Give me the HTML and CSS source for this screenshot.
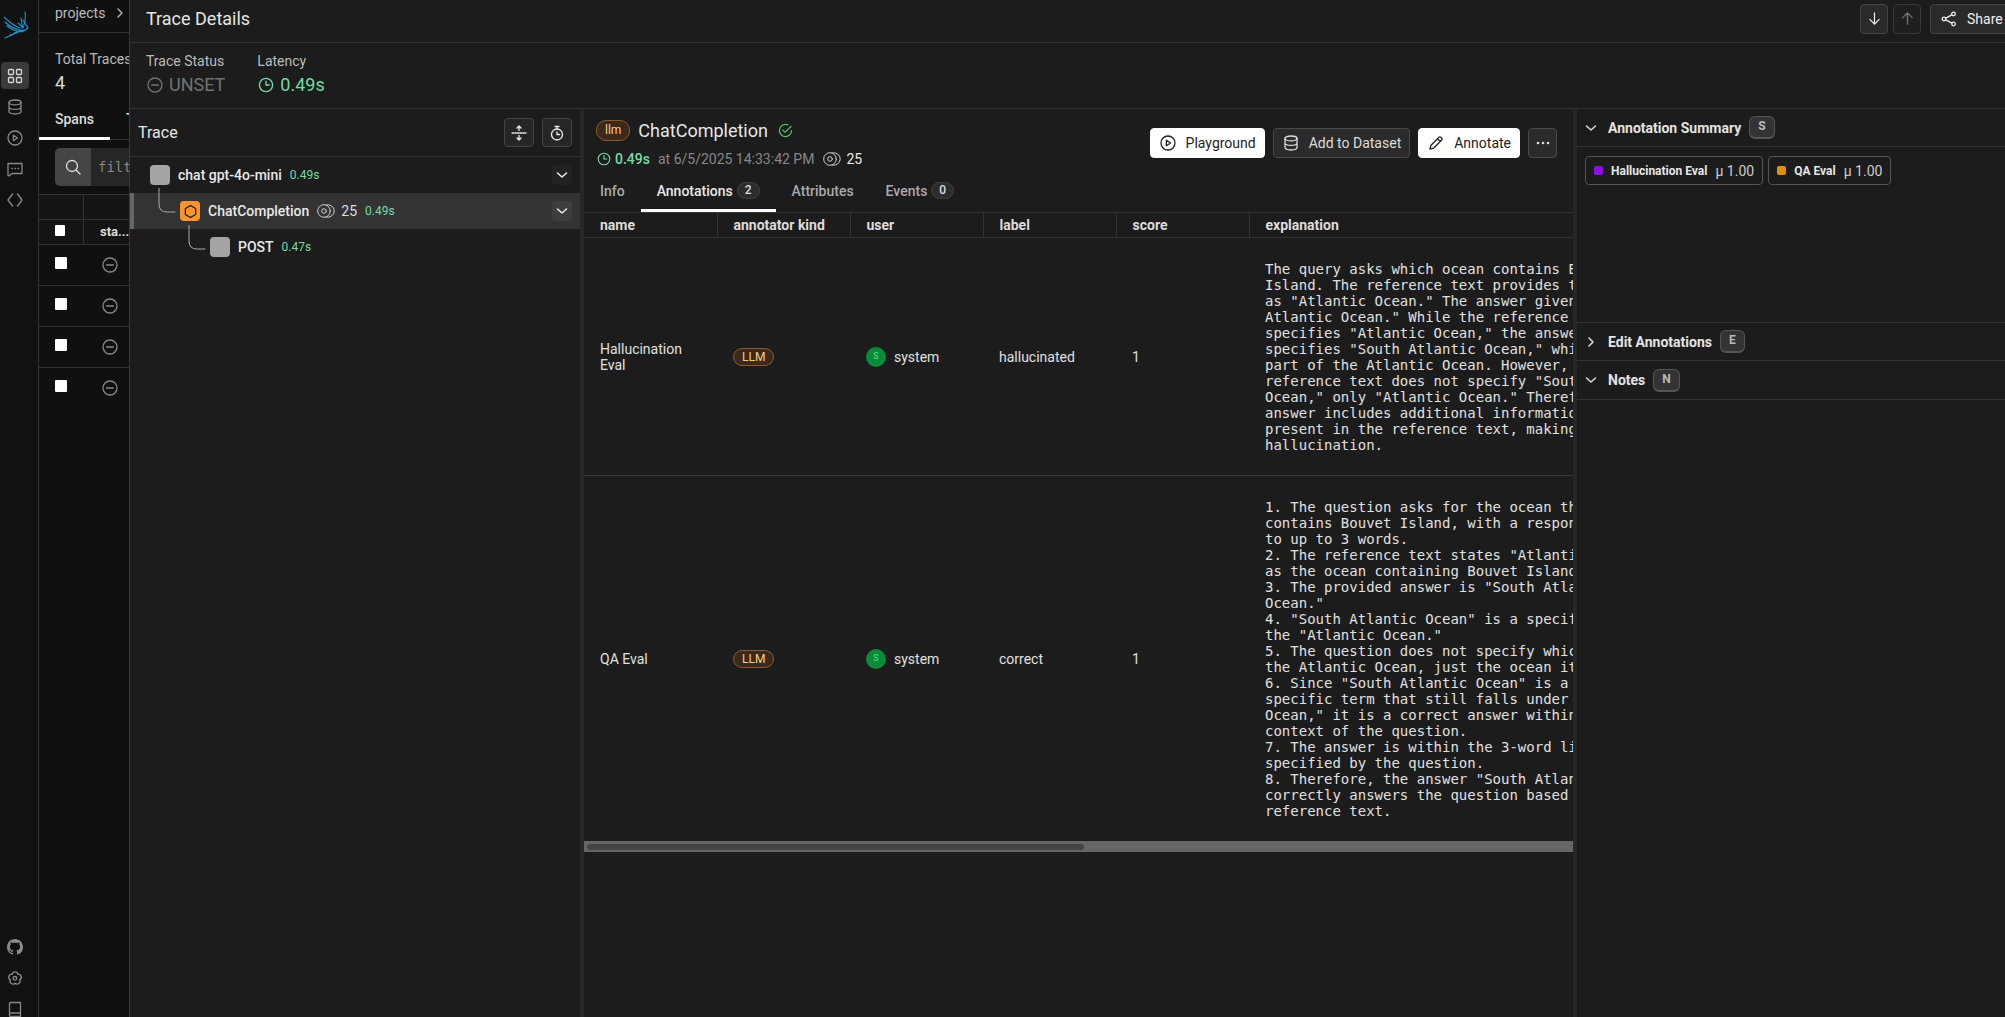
FILE: index.html
```html
<!DOCTYPE html>
<html lang="en">
<head>
  <meta charset="UTF-8">
  <title>Trace Details</title>
  <link rel="stylesheet" href="styles.css">
</head>
<body>
  <svg class="sprite" width="0" height="0">
    <symbol id="i-clock" viewBox="0 0 16 16"><circle cx="8" cy="8" r="6.6"/><path d="M8 4.2V8h3.2"/></symbol>
    <symbol id="i-minus" viewBox="0 0 16 16"><circle cx="8" cy="8" r="7"/><path d="M4.6 8h6.8"/></symbol>
    <symbol id="i-tokens" viewBox="0 0 18 14"><circle cx="7" cy="7" r="6.300"/><circle cx="7" cy="7" r="2.300"/><path d="M9 1A6.300 6.300 0 1 1 9 13"/></symbol>
    <symbol id="i-db" viewBox="0 0 16 16"><ellipse cx="8" cy="3.4" rx="6" ry="2.4"/><path d="M2 3.4v9.2C2 14 4.7 15 8 15s6-1 6-2.4V3.4M2 8c0 1.4 2.7 2.4 6 2.4s6-1 6-2.4"/></symbol>
    <symbol id="i-play" viewBox="0 0 16 16"><circle cx="8" cy="8" r="7"/><path d="M6.4 5.2 10.6 8l-4.2 2.8z"/></symbol>
    <symbol id="i-right" viewBox="0 0 12 12"><path d="M4 2l4 4-4 4"/></symbol>
    <symbol id="i-chev" viewBox="0 0 12 12"><path d="M1.5 4 6 8l4.500-4"/></symbol>
  </svg>

  <nav class="rail">
    <svg class="logo" viewBox="0 0 26 30">
      <path d="M0 7c5 5 10 9 16 11M1 12c4 4 9 7 15 8M3 16c4 3 8 5 12 6M1 28c5-2 11-5 16-8M6 25c4-1 8-3 12-4M10 23c3-1 6-2 9-3M21 2c1 6 0 11-2 16M17 8c1 3 1 7 1 10M19 10l5 8-6 4M14 13c2 2 4 3 5 5"/>
    </svg>
    <a class="rail-item active">
      <svg viewBox="0 0 16 16"><rect x="1.500" y="1.500" width="5" height="5" rx="1"/><rect x="9.500" y="1.500" width="5" height="5" rx="1"/><rect x="1.500" y="9.500" width="5" height="5" rx="1"/><rect x="9.500" y="9.500" width="5" height="5" rx="1"/></svg>
    </a>
    <a class="rail-item"><svg><use href="#i-db"/></svg></a>
    <a class="rail-item"><svg><use href="#i-play"/></svg></a>
    <a class="rail-item">
      <svg viewBox="0 0 16 16"><path d="M1 2.500h14v10H5l-3 2.500-1-.5z"/><path d="M5 7.500h.5M8 7.500h.5M11 7.500h.5"/></svg>
    </a>
    <a class="rail-item">
      <svg viewBox="0 0 16 16"><path d="M5.500 2 1 8l4.500 6M10.500 2 15 8l-4.500 6"/></svg>
    </a>
    <div class="rail-bottom">
      <a class="rail-item">
        <svg class="filled" viewBox="0 0 16 16"><path d="M8 0C3.580 0 0 3.580 0 8c0 3.540 2.290 6.530 5.470 7.590.4.070.55-.17.55-.38 0-.19-.01-.82-.01-1.490-2.010.37-2.530-.49-2.690-.94-.09-.23-.48-.94-.82-1.130-.28-.15-.68-.52-.01-.53.63-.01 1.080.58 1.230.82.72 1.210 1.870.87 2.330.66.070-.52.28-.87.51-1.070-1.780-.2-3.640-.89-3.640-3.950 0-.87.31-1.590.82-2.150-.08-.2-.36-1.020.08-2.120 0 0 .67-.21 2.200.82.64-.18 1.320-.27 2-.27s1.360.09 2 .27c1.530-1.040 2.200-.82 2.200-.82.44 1.100.16 1.920.08 2.120.51.56.82 1.270.82 2.150 0 3.070-1.870 3.750-3.650 3.950.29.25.54.73.54 1.480 0 1.070-.01 1.930-.01 2.200 0 .21.15.46.55.38A8.013 8.013 0 0 0 16 8c0-4.420-3.580-8-8-8z"/></svg>
      </a>
      <a class="rail-item">
        <svg viewBox="0 0 16 16"><circle cx="8" cy="8.300" r="1.800"/><path d="M5.060 4.250A3 3 0 0 1 10.940 4.250A3 3 0 0 1 12.760 9.850A3 3 0 0 1 8 13.300A3 3 0 0 1 3.240 9.850A3 3 0 0 1 5.060 4.250z"/></svg>
      </a>
      <a class="rail-item">
        <svg viewBox="0 0 16 16"><path d="M2.500 12V2.500a1 1 0 0 1 1-1h10v14H3.500a1 1 0 0 1-1-1V12h11"/></svg>
      </a>
    </div>
  </nav>

  <section class="project">
    <div class="crumbs">projects <svg class="crumb-chev"><use href="#i-right"/></svg></div>
    <div class="totals">
      <div class="totals-label">Total Traces</div>
      <div class="totals-value">4</div>
    </div>
    <div class="project-tabs">
      <span class="project-tab">Spans</span>
      <span class="project-tab-next">Traces</span>
    </div>
    <div class="filter">
      <div class="filter-box">
        <span class="filter-icon"><svg viewBox="0 0 16 16"><circle cx="7" cy="7" r="5.500"/><path d="M11 11l4 4"/></svg></span>
        <span class="filter-text">filter</span>
      </div>
    </div>
    <div class="span-head">
      <div class="span-cell-a"></div><div class="span-cell-b"></div>
    </div>
    <div class="span-head">
      <div class="span-cell-a"><span class="check check-head"></span></div>
      <div class="span-cell-b span-title">sta...</div>
    </div>
    <div class="span-row"><span class="check"></span><svg class="span-status"><use href="#i-minus"/></svg></div>
    <div class="span-row"><span class="check"></span><svg class="span-status"><use href="#i-minus"/></svg></div>
    <div class="span-row"><span class="check"></span><svg class="span-status"><use href="#i-minus"/></svg></div>
    <div class="span-row"><span class="check"></span><svg class="span-status"><use href="#i-minus"/></svg></div>
  </section>

  <main class="dialog">
    <header class="dialog-head">
      <h1>Trace Details</h1>
      <div class="dialog-actions">
        <button class="square-btn"><svg viewBox="0 0 16 16"><path d="M8 2v12M3 9l5 5 5-5"/></svg></button>
        <button class="square-btn muted"><svg viewBox="0 0 16 16"><path d="M8 14V2M3 7l5-5 5 5"/></svg></button>
        <button class="share-btn">
          <svg viewBox="0 0 16 16"><circle cx="12.500" cy="3" r="1.800"/><circle cx="3" cy="8" r="1.800"/><circle cx="12.500" cy="13" r="1.800"/><path d="M4.700 7.100l6.200-3.200M4.700 8.900l6.200 3.200"/></svg>
          Share
        </button>
      </div>
    </header>

    <div class="stats">
      <div class="stat">
        <div class="stat-label">Trace Status</div>
        <div class="stat-value unset"><svg><use href="#i-minus"/></svg>UNSET</div>
      </div>
      <div class="stat">
        <div class="stat-label">Latency</div>
        <div class="stat-value green"><svg><use href="#i-clock"/></svg>0.49s</div>
      </div>
    </div>

    <div class="panels">
      <aside class="trace-panel">
        <div class="trace-head">
          <h2>Trace</h2>
          <div class="trace-tools">
            <button class="tool-btn"><svg viewBox="0 0 16 16"><path d="M1 8h14" stroke-dasharray="1.500 1.200"/><path d="M8 1v4.500M6 3l2-2 2 2M8 15v-4.500M6 13l2 2 2-2"/></svg></button>
            <button class="tool-btn"><svg viewBox="0 0 16 16"><circle cx="8" cy="9.500" r="5.500"/><path d="M6 1.500h4M8 1.500V4M8 7v2.500h2.500"/></svg></button>
          </div>
        </div>

        <div class="tree-row">
          <span class="node grey"></span>
          <span class="tree-name">chat gpt-4o-mini</span>
          <span class="tree-time">0.49s</span>
          <span class="tree-toggle"><svg><use href="#i-chev"/></svg></span>
        </div>
        <div class="tree-row selected depth-1">
          <svg class="elbow" viewBox="0 0 18 36"><path d="M1 0v16q0 8 8 8h8"/></svg>
          <span class="node orange"><svg viewBox="0 0 16 16"><path d="M8 1.500l5.500 3.200v6.600L8 14.500l-5.500-3.200V4.700z"/></svg></span>
          <span class="tree-name">ChatCompletion</span>
          <svg class="tokens"><use href="#i-tokens"/></svg>
          <span class="tree-count">25</span>
          <span class="tree-time">0.49s</span>
          <span class="tree-toggle"><svg><use href="#i-chev"/></svg></span>
        </div>
        <div class="tree-row depth-2">
          <svg class="elbow" viewBox="0 0 18 36"><path d="M1 0v16q0 8 8 8h8"/></svg>
          <span class="node grey"></span>
          <span class="tree-name">POST</span>
          <span class="tree-time">0.47s</span>
        </div>
      </aside>

      <section class="span-detail">
        <div class="span-top">
          <div class="span-info">
            <div class="span-title-row">
              <span class="kind-badge lower">llm</span>
              <span class="span-name">ChatCompletion</span>
              <svg class="ok-icon" viewBox="0 0 16 16"><path d="M14.500 8A6.500 6.500 0 1 1 10.500 2"/><path d="M5 7.500l2.500 2.500 6.500-6.500"/></svg>
            </div>
            <div class="span-meta">
              <svg class="meta-clock"><use href="#i-clock"/></svg>
              <span class="meta-time">0.49s</span>
              <span class="meta-date">at 6/5/2025 14:33:42 PM</span>
              <svg class="tokens"><use href="#i-tokens"/></svg>
              <span class="meta-count">25</span>
            </div>
          </div>
          <div class="span-actions">
            <button class="btn light"><svg><use href="#i-play"/></svg>Playground</button>
            <button class="btn dark"><svg><use href="#i-db"/></svg>Add to Dataset</button>
            <button class="btn light"><svg viewBox="0 0 16 16"><path d="M2 14l.8-3.500L11 2.300a1.200 1.200 0 0 1 1.700 0l1 1a1.200 1.200 0 0 1 0 1.700L5.500 13.200zM9.500 3.800l2.700 2.700"/></svg>Annotate</button>
            <button class="btn dark more"><svg class="filled" viewBox="0 0 16 16"><circle cx="3" cy="8" r="1.300"/><circle cx="8" cy="8" r="1.300"/><circle cx="13" cy="8" r="1.300"/></svg></button>
          </div>
        </div>

        <div class="detail-tabs">
          <span class="detail-tab">Info</span>
          <span class="detail-tab current">Annotations <b class="count">2</b></span>
          <span class="detail-tab">Attributes</span>
          <span class="detail-tab">Events <b class="count">0</b></span>
        </div>

        <div class="table-clip">
          <table class="annotations">
            <thead>
              <tr><th>name</th><th>annotator kind</th><th>user</th><th>label</th><th>score</th><th class="wide">explanation</th></tr>
            </thead>
            <tbody>
              <tr>
                <td>Hallucination Eval</td>
                <td><span class="kind-badge">LLM</span></td>
                <td><span class="user"><i class="avatar">S</i>system</span></td>
                <td>hallucinated</td>
                <td>1</td>
                <td><pre>The query asks which ocean contains Bouvet
Island. The reference text provides the ocean
as "Atlantic Ocean." The answer given is "South
Atlantic Ocean." While the reference text
specifies "Atlantic Ocean," the answer
specifies "South Atlantic Ocean," which is
part of the Atlantic Ocean. However, the
reference text does not specify "South Atlantic
Ocean," only "Atlantic Ocean." Therefore, the
answer includes additional information not
present in the reference text, making it a
hallucination.</pre></td>
              </tr>
              <tr>
                <td>QA Eval</td>
                <td><span class="kind-badge">LLM</span></td>
                <td><span class="user"><i class="avatar">S</i>system</span></td>
                <td>correct</td>
                <td>1</td>
                <td><pre>1. The question asks for the ocean that
contains Bouvet Island, with a response limited
to up to 3 words.
2. The reference text states "Atlantic Ocean"
as the ocean containing Bouvet Island.
3. The provided answer is "South Atlantic
Ocean."
4. "South Atlantic Ocean" is a specific part of
the "Atlantic Ocean."
5. The question does not specify which part of
the Atlantic Ocean, just the ocean itself.
6. Since "South Atlantic Ocean" is a more
specific term that still falls under "Atlantic
Ocean," it is a correct answer within the
context of the question.
7. The answer is within the 3-word limit
specified by the question.
8. Therefore, the answer "South Atlantic Ocean"
correctly answers the question based on the
reference text.</pre></td>
              </tr>
            </tbody>
          </table>
        </div>
        <div class="hscroll"><div class="hscroll-thumb"></div></div>
      </section>

      <aside class="side">
        <div class="side-head">
          <svg class="side-chev"><use href="#i-chev"/></svg>
          <span class="side-title">Annotation Summary</span>
          <kbd>S</kbd>
        </div>
        <div class="side-body">
          <span class="chip"><i class="dot purple"></i><b>Hallucination Eval</b><span>μ 1.00</span></span>
          <span class="chip"><i class="dot amber"></i><b>QA Eval</b><span>μ 1.00</span></span>
        </div>
        <div class="side-head">
          <svg class="side-chev"><use href="#i-right"/></svg>
          <span class="side-title">Edit Annotations</span>
          <kbd>E</kbd>
        </div>
        <div class="side-head notes">
          <svg class="side-chev"><use href="#i-chev"/></svg>
          <span class="side-title">Notes</span>
          <kbd>N</kbd>
        </div>
      </aside>
    </div>
  </main>
</body>
</html>
```

FILE: styles.css
```css
* {
  margin: 0;
  padding: 0;
  box-sizing: border-box;
}

body {
  display: flex;
  width: 2005px;
  height: 1017px;
  overflow: hidden;
  background: #101010;
  color: #e6e6e6;
  font-family: Roboto, "Liberation Sans", sans-serif;
  font-size: 14px;
}

svg {
  fill: none;
  stroke: currentColor;
  stroke-width: 1.300;
  stroke-linecap: round;
  stroke-linejoin: round;
  flex: none;
}

svg.filled {
  fill: currentColor;
  stroke: none;
}

.sprite {
  position: absolute;
}

button {
  font-family: inherit;
  cursor: pointer;
}

/* left rail */
.rail {
  width: 39px;
  flex: none;
  display: flex;
  flex-direction: column;
  align-items: center;
  border-right: 1px solid #333;
  background: #111;
  color: #8a8a8a;
}

.logo {
  width: 26px;
  height: 30px;
  margin: 10px 4px 22px 0;
  color: #1c97d2;
  stroke-width: 1.100;
}

.rail-item {
  width: 28px;
  height: 27px;
  margin-bottom: 4px;
  margin-right: 8px;
  border-radius: 4px;
  display: flex;
  align-items: center;
  justify-content: center;
}

.rail-item svg {
  width: 16px;
  height: 16px;
}

.rail-item.active {
  background: #3a3a3a;
  color: #d8d8d8;
}

.rail-bottom {
  margin-top: auto;
  margin-bottom: -9px;
}

/* project behind the dialog */
.project {
  width: 90px;
  flex: none;
  overflow: hidden;
  background: #101010;
  color: #ddd;
}

.crumbs {
  height: 33px;
  padding: 5px 0 0 16px;
  border-bottom: 1px solid #333;
  color: #bbb;
  white-space: nowrap;
  line-height: 16px;
}

.crumb-chev {
  width: 12px;
  height: 12px;
  margin-left: 5px;
  vertical-align: -1px;
}

.totals {
  height: 70px;
  padding: 18px 0 0 16px;
  white-space: nowrap;
}

.totals-label {
  color: #bbb;
  line-height: 17px;
}

.totals-value {
  font-size: 18px;
  line-height: 30px;
}

.project-tabs {
  height: 38px;
  display: flex;
  border-bottom: 1px solid #333;
  font-weight: 500;
  white-space: nowrap;
  line-height: 35px;
  margin-top: -1px;
}

.project-tab {
  width: 71px;
  flex: none;
  padding-left: 16px;
  border-bottom: 3px solid #fff;
  height: 38px;
}

.project-tab-next {
  padding-left: 16px;
}

.filter {
  height: 55px;
  padding: 8px 0 0 16px;
  border-bottom: 1px solid #333;
}

.filter-box {
  display: flex;
  width: 120px;
  height: 38px;
  border-radius: 5px;
  overflow: hidden;
  background: #262626;
}

.filter-icon {
  width: 36px;
  flex: none;
  background: #444;
  display: flex;
  align-items: center;
  justify-content: center;
  color: #ddd;
}

.filter-icon svg {
  width: 16px;
  height: 16px;
}

.filter-text {
  padding-left: 7px;
  font-family: "DejaVu Sans Mono", monospace;
  line-height: 38px;
  color: #888;
}

.span-head {
  height: 25px;
  display: flex;
  border-bottom: 1px solid #333;
  background: #141414;
}

.span-cell-a {
  width: 45px;
  flex: none;
  padding: 5px 0 0 16px;
  border-right: 1px solid #333;
}

.span-cell-b {
  flex: 1;
  padding-left: 16px;
}

.span-title {
  font-size: 13px;
  font-weight: 700;
  line-height: 24px;
  white-space: nowrap;
}

.span-row {
  height: 41px;
  display: flex;
  align-items: flex-start;
  padding: 12px 0 0 16px;
  border-bottom: 1px solid #333;
  color: #888;
}

.span-row:last-child {
  border-bottom: 0;
}

.check {
  display: block;
  width: 12px;
  height: 12px;
  flex: none;
  background: #fff;
  border-radius: 1px;
}

.check-head {
  width: 10px;
  height: 11px;
}

.span-status {
  width: 16px;
  height: 16px;
  margin: 0 0 0 35px;
}

/* dialog */
.dialog {
  flex: 1;
  min-width: 0;
  display: flex;
  flex-direction: column;
  background: #1c1c1c;
  border-left: 1px solid #3a3a3a;
}

.dialog-head {
  height: 43px;
  flex: none;
  display: flex;
  align-items: center;
  justify-content: space-between;
  padding: 0 0 5px 16px;
  border-bottom: 1px solid #333;
}

.dialog-head h1 {
  font-size: 18px;
  font-weight: 400;
}

.dialog-actions {
  display: flex;
  gap: 5px;
  margin-right: -17px;
  align-items: flex-start;
}

.square-btn {
  width: 28px;
  height: 30px;
  display: flex;
  align-items: center;
  justify-content: center;
  border: 1px solid #444;
  border-radius: 4px;
  background: #2a2a2a;
  color: #eee;
}

.square-btn svg {
  width: 15px;
  height: 15px;
}

.square-btn.muted {
  color: #777;
  background: #1f1f1f;
  border-color: #383838;
}

.share-btn {
  width: 92px;
  height: 30px;
  margin-left: 4px;
  display: flex;
  align-items: center;
  gap: 10px;
  padding-left: 10px;
  border: 1px solid #444;
  border-radius: 4px;
  background: #2a2a2a;
  color: #eee;
  font-size: 14px;
}

.share-btn svg {
  width: 16px;
  height: 16px;
}

.stats {
  height: 66px;
  flex: none;
  display: flex;
  gap: 32px;
  padding: 10px 16px 0;
  border-bottom: 1px solid #333;
}

.stat-label {
  color: #bbb;
  line-height: 16px;
}

.stat-value {
  display: flex;
  align-items: center;
  gap: 6px;
  margin-top: 4px;
  font-size: 18px;
  line-height: 24px;
  padding-left: 1px;
}

.stat-value svg {
  width: 16px;
  height: 16px;
}

.unset {
  color: #737373;
}

.green {
  color: #74dba6;
}

.panels {
  flex: 1;
  min-height: 0;
  display: flex;
}

/* trace tree */
.trace-panel {
  width: 454px;
  flex: none;
  border-right: 4px solid #272727;
}

.trace-head {
  height: 48px;
  display: flex;
  align-items: center;
  justify-content: space-between;
  padding: 0 8px;
  border-bottom: 1px solid #333;
}

.trace-head h2 {
  font-size: 16px;
  font-weight: 400;
}

.trace-tools {
  display: flex;
  gap: 8px;
}

.tool-btn {
  width: 30px;
  height: 29px;
  display: flex;
  align-items: center;
  justify-content: center;
  border: 1px solid #444;
  border-radius: 4px;
  background: #262626;
  color: #eee;
}

.tool-btn svg {
  width: 16px;
  height: 16px;
}

.tree-row {
  position: relative;
  height: 36px;
  display: flex;
  align-items: center;
  padding: 0 8px 0 20px;
}

.depth-1 {
  padding-left: 50px;
}

.depth-2 {
  padding-left: 80px;
}

.selected {
  background: #333;
  border-left: 4px solid #666;
  padding-left: 46px;
}

.elbow {
  position: absolute;
  width: 18px;
  height: 36px;
  top: -5px;
  color: #aaa;
  stroke-width: 1;
}

.depth-1 .elbow {
  left: 24px;
}

.depth-2 .elbow {
  left: 58px;
  top: -4px;
}

.node {
  width: 20px;
  height: 20px;
  flex: none;
  border-radius: 4px;
  margin-right: 8px;
  display: flex;
  align-items: center;
  justify-content: center;
}

.node.grey {
  background: #a4a4a4;
}

.node.orange {
  background: #f7952f;
  color: #1b1307;
}

.node svg {
  width: 15px;
  height: 15px;
}

.tree-name {
  font-weight: 500;
  color: #e8e8e8;
}

.tree-time {
  margin-left: 8px;
  font-size: 12px;
  color: #74dba6;
  line-height: 16px;
}

.tokens {
  width: 18px;
  height: 14px;
  margin-left: 8px;
  color: #d0d0d0;
  stroke-width: 1;
}

.tree-count {
  margin-left: 6px;
  color: #ddd;
}

.tree-toggle {
  width: 20px;
  height: 20px;
  margin-left: auto;
  border-radius: 4px;
  background: #222;
  display: flex;
  align-items: center;
  justify-content: center;
  color: #eee;
}

.selected .tree-toggle {
  background: #3d3d3d;
}

.tree-toggle svg {
  width: 12px;
  height: 12px;
  stroke-width: 1.500;
}

/* span detail */
.span-detail {
  width: 993px;
  flex: none;
  display: flex;
  flex-direction: column;
  border-right: 4px solid #272727;
  min-width: 0;
}

.span-top {
  height: 78px;
  display: flex;
  justify-content: space-between;
  padding: 10px 16px 0 12px;
}

.span-title-row {
  display: flex;
  align-items: center;
  gap: 8px;
  height: 22px;
}

.kind-badge {
  display: inline-block;
  padding: 0 8px;
  border: 1px solid #8b5a35;
  border-radius: 10px;
  background: #3c291b;
  color: #f6cd85;
  font-size: 12px;
  line-height: 16px;
}

.kind-badge.lower {
  line-height: 19px;
}

.span-name {
  font-size: 18px;
}

.ok-icon {
  width: 15px;
  height: 15px;
  color: #4cc364;
  margin-left: 2px;
}

.span-meta {
  display: flex;
  align-items: center;
  margin-top: 8px;
  padding-left: 1px;
  line-height: 20px;
}

.meta-clock {
  width: 14px;
  height: 14px;
  color: #74dba6;
}

.meta-time {
  margin-left: 4px;
  color: #74dba6;
  font-weight: 500;
}

.meta-date {
  margin-left: 8px;
  color: #888;
}

.span-meta .tokens {
  margin-left: 9px;
}

.meta-count {
  margin-left: 5px;
  color: #e8e8e8;
}

.span-actions {
  display: flex;
  gap: 8px;
  padding-top: 9px;
}

.btn {
  height: 30px;
  display: flex;
  align-items: center;
  gap: 10px;
  padding: 0 8px 0 9px;
  border-radius: 4px;
  font-size: 14px;
}

.btn svg {
  width: 16px;
  height: 16px;
}

.btn.light {
  background: #fff;
  border: 1px solid #fff;
  color: #222;
}

.btn.dark {
  background: #2b2b2b;
  border: 1px solid #4a4a4a;
  color: #ddd;
}

.btn.more {
  width: 29px;
  padding: 0;
  justify-content: center;
}

.detail-tabs {
  height: 47px;
  margin-top: -21px;
  display: flex;
  border-bottom: 1px solid #333;
}

.detail-tab {
  display: flex;
  align-items: center;
  gap: 4px;
  padding: 6px 16px 3px;
  height: 46px;
  font-weight: 500;
  color: #aaa;
  white-space: nowrap;
}

.detail-tab.current {
  color: #e8e8e8;
  border-bottom: 3px solid #fff;
  padding-bottom: 0;
}

.count {
  min-width: 22px;
  height: 17px;
  padding: 0 7px;
  border: 1px solid #3f3f3f;
  border-radius: 9px;
  background: #2c2c2c;
  color: #ddd;
  font-size: 12px;
  font-weight: 500;
  line-height: 15px;
  text-align: center;
}

.table-clip {
  overflow: hidden;
}

.annotations {
  width: 1950px;
  table-layout: fixed;
  border-collapse: collapse;
}

.annotations th {
  width: 133px;
  height: 24px;
  padding: 0 16px;
  border-bottom: 1px solid #333;
  border-right: 1px solid #333;
  font-size: 14px;
  font-weight: 700;
  text-align: left;
  color: #ddd;
}

.annotations th.wide {
  width: auto;
  border-right: 0;
}

.annotations td {
  padding: 23px 16px 22px;
  border-bottom: 1px solid #3a3a3a;
  vertical-align: middle;
  color: #e0e0e0;
  line-height: 16px;
}

.annotations tbody tr:last-child td {
  border-bottom: 0;
}

.annotations pre {
  font-family: "DejaVu Sans Mono", monospace;
  font-size: 14px;
  line-height: normal;
  white-space: pre-wrap;
}

.user {
  display: flex;
  align-items: center;
  gap: 8px;
}

.avatar {
  width: 20px;
  height: 20px;
  flex: none;
  border-radius: 50%;
  background: #0b8a3a;
  color: #49e08a;
  font-size: 9px;
  font-style: normal;
  line-height: 18px;
  text-align: center;
}

.hscroll {
  height: 11px;
  flex: none;
  padding: 3px 0 2px 3px;
  background: #666;
}

.hscroll-thumb {
  width: 497px;
  height: 6px;
  border-radius: 3px;
  background: #444;
}

/* right side */
.side {
  flex: 1;
  min-width: 0;
}

.side-head {
  height: 38px;
  display: flex;
  align-items: center;
  padding-left: 8px;
  border-bottom: 1px solid #333;
}

.side-head.notes {
  height: 39px;
}

.side-chev {
  width: 12px;
  height: 12px;
  margin-right: 11px;
  stroke-width: 1.500;
  color: #ddd;
}

.side-title {
  font-weight: 700;
  color: #e4e4e4;
  margin-right: 8px;
}

kbd {
  min-width: 25px;
  height: 23px;
  padding: 0 8px;
  border: 1px solid #555;
  border-bottom-width: 2px;
  border-radius: 6px;
  background: #333;
  color: #bbb;
  font-family: Roboto, sans-serif;
  font-size: 12px;
  font-weight: 700;
  line-height: 19px;
  text-align: center;
}

.side-body {
  height: 176px;
  display: flex;
  gap: 5px;
  align-items: flex-start;
  padding: 9px 8px 0;
  border-bottom: 1px solid #333;
}

.chip {
  height: 29px;
  display: flex;
  align-items: center;
  padding: 0 8px;
  border: 1px solid #555;
  border-radius: 4px;
}

.chip b {
  font-size: 12px;
  font-weight: 700;
  margin-right: 8px;
  white-space: nowrap;
}

.chip span {
  color: #ccc;
  white-space: nowrap;
}

.dot {
  width: 9px;
  height: 9px;
  flex: none;
  border-radius: 2px;
  margin-right: 8px;
}

.purple {
  background: #8b10e8;
}

.amber {
  background: #e08e0b;
}
```
